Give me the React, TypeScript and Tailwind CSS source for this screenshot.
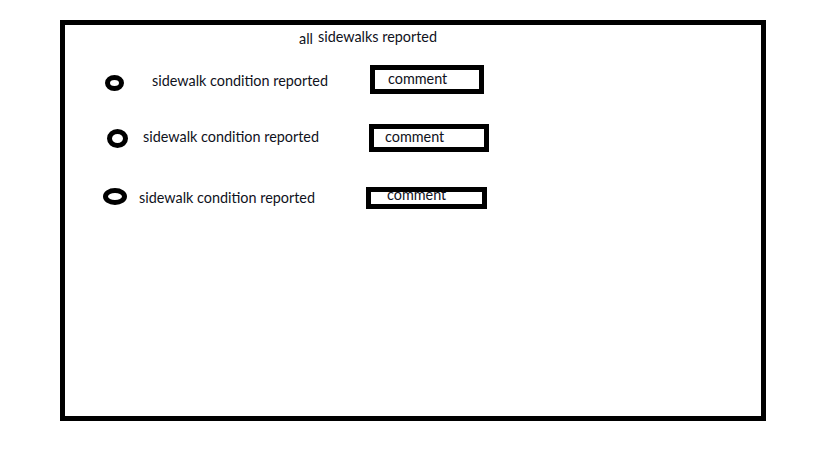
const rows = [
  {
    row: "mt-[18px]",
    circle: "ml-[40px] mt-[10px] h-[16px] w-[19px] border-[5px]",
    label: "ml-[28px] mt-[6px] w-[218px]",
    box: "h-[29px] w-[114px] pl-[13px] leading-[18px]",
  },
  {
    row: "mt-[30px]",
    circle: "ml-[42px] mt-[5px] h-[19px] w-[21px] border-[5px]",
    label: "ml-[15px] mt-[3px] w-[226px]",
    box: "h-[28px] w-[120px] pl-[11px] leading-4",
  },
  {
    row: "mt-[35px]",
    circle: "ml-[38px] mt-[1px] h-[17px] w-[24px] border-[5px]",
    label: "ml-[12px] mt-[1px] w-[227px]",
    box: "h-[22px] w-[121px] pl-[16px] leading-[6px]",
  },
]

export default function App() {
  return (
    <div className="min-h-[460px] w-[819px] bg-white pl-[60px] pt-[20px] font-['Lato','Open_Sans',sans-serif] text-[14.4px] text-[#10121c]">
      <div className="h-[401px] w-[706px] border-[5px] border-black">
        <h1 className="ml-[234px] mt-[2px] flex items-baseline leading-5">
          <span className="relative top-[2px]">all</span>
          <span className="ml-[5px]">sidewalks reported</span>
        </h1>
        {rows.map((r, i) => (
          <div key={i} className={`flex items-start ${r.row}`}>
            <span className={`rounded-[50%] border-black ${r.circle}`} />
            <span className={`leading-5 ${r.label}`}>sidewalk condition reported</span>
            <div className={`border-[5px] border-black ${r.box}`}>comment</div>
          </div>
        ))}
      </div>
    </div>
  )
}
